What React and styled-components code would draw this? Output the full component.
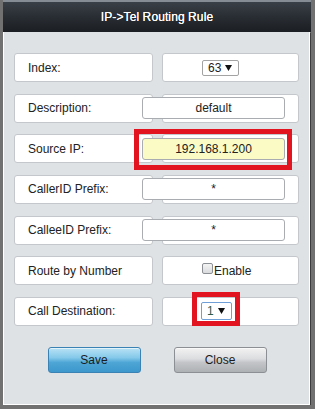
import styled, { createGlobalStyle } from 'styled-components';

const GlobalStyle = createGlobalStyle`
  html, body {
    margin: 0;
    padding: 0;
    background: #717171;
  }
  body {
    font-family: "Liberation Sans", Arial, sans-serif;
  }
`;

const Dialog = styled.div`
  width: 308px;
  margin-left: 3px;
  border-top: 2px solid #858c93;
`;

const TitleBar = styled.div`
  height: 30px;
  background: linear-gradient(#3a4047 0%, #2a2f35 45%, #1b1e22 100%);
  color: #fff;
  font-size: 12px;
  line-height: 30px;
  text-align: center;
  letter-spacing: 0.1px;
  text-shadow: 0 0 0.4px #fff;
`;

const Body = styled.div`
  width: 285px;
  height: 341px;
  padding: 21px 10px 10px 10px;
  background: #dfe2e5;
  border: 1px solid #fff;
  border-top: none;
  box-shadow: 1px 1px 0 #3c3c3c;
  display: flex;
  flex-direction: column;
`;

const Form = styled.div`
  display: grid;
  grid-template-columns: 139px 137px;
  grid-auto-rows: 29px;
  column-gap: 9px;
  row-gap: 11.67px;
`;

const Cell = styled.div`
  box-sizing: border-box;
  background: #fff;
  border: 1px solid #c4c8cc;
  border-radius: 3px;
  display: flex;
  align-items: center;
  font-size: 12px;
  color: #222;
`;

const LabelCell = styled(Cell)`
  padding-left: 13px;
`;

const ValueCell = styled(Cell)`
  padding-left: ${({ $pad }) => ($pad === undefined ? 39 : $pad)}px;
`;

const TextInput = styled.div`
  box-sizing: border-box;
  width: 143px;
  height: 22px;
  margin-left: ${({ $ml }) => ($ml === undefined ? -60 : $ml)}px;
  border: 1px solid #a9acb0;
  border-radius: 3px;
  background: ${({ $active }) => ($active ? '#fbfbc6' : '#fff')};
  display: flex;
  align-items: center;
  justify-content: center;
  font-size: 12px;
  color: #222;
`;

const Select = styled.div`
  box-sizing: border-box;
  width: ${({ $w }) => $w}px;
  height: ${({ $h }) => $h}px;
  border: 1px solid ${({ $focus }) => ($focus ? '#6f9fd6' : '#a3a3a3')};
  border-radius: 2px;
  background: #fff;
  display: flex;
  align-items: center;
  justify-content: space-between;
  padding: 0 6px 0 5px;
  font-size: 12px;
  color: ${({ $focus }) => ($focus ? '#2f5a44' : '#222')};
`;

const Highlight = styled.div`
  position: relative;
  display: flex;
  margin-left: ${({ $ml }) => $ml || 0}px;

  &::after {
    content: '';
    position: absolute;
    inset: ${({ $inset }) => $inset};
    border: 5px solid #e2141f;
    pointer-events: none;
  }
`;

const Check = styled.span`
  box-sizing: border-box;
  width: 11px;
  height: 11px;
  margin-bottom: 4px;
  border: 1px solid #8c8f93;
  border-radius: 2px;
  background: linear-gradient(#f4f4f4, #d9dbdd);
`;

const CheckLabel = styled.span`
  font-size: 12px;
  color: #222;
  margin-left: 1px;
`;

const Buttons = styled.div`
  display: flex;
  justify-content: center;
  gap: 33px;
  margin-top: 21px;
  padding-left: 1px;
`;

const Button = styled.div`
  box-sizing: border-box;
  width: 93px;
  height: 26px;
  border-radius: 3px;
  display: flex;
  align-items: center;
  justify-content: center;
  font-size: 12px;
  color: #1c1c1c;
  border: 1px solid ${({ $primary }) => ($primary ? '#3a82b4' : '#8c9094')};
  background: ${({ $primary }) =>
    $primary
      ? 'linear-gradient(#b9e2f4 0%, #85c9ea 40%, #4ea6d6 60%, #3d97cb 100%)'
      : 'linear-gradient(#f2f2f2 0%, #dcdddf 45%, #c3c5c8 60%, #aeb1b4 100%)'};
  box-shadow: inset 0 1px 0 rgba(255, 255, 255, 0.6);
`;

const Arrow = () => (
  <svg width="7" height="6" viewBox="0 0 7 6">
    <path d="M0 0 H7 L3.5 6 Z" fill="#111" />
  </svg>
);

export default function App() {
  return (
    <>
      <GlobalStyle />
      <Dialog>
        <TitleBar>IP-&gt;Tel Routing Rule</TitleBar>
        <Body>
          <Form>
            <LabelCell>Index:</LabelCell>
            <ValueCell>
              <Select $w={37} $h={16}>
                <span>63</span>
                <Arrow />
              </Select>
            </ValueCell>

            <LabelCell>Description:</LabelCell>
            <ValueCell>
              <TextInput>default</TextInput>
            </ValueCell>

            <LabelCell>Source IP:</LabelCell>
            <ValueCell>
              <Highlight $ml={-60} $inset="-9px -7px -10px -8px">
                <TextInput $active $ml={0}>192.168.1.200</TextInput>
              </Highlight>
            </ValueCell>

            <LabelCell>CallerID Prefix:</LabelCell>
            <ValueCell>
              <TextInput>*</TextInput>
            </ValueCell>

            <LabelCell>CalleeID Prefix:</LabelCell>
            <ValueCell>
              <TextInput>*</TextInput>
            </ValueCell>

            <LabelCell>Route by Number</LabelCell>
            <ValueCell>
              <Check />
              <CheckLabel>Enable</CheckLabel>
            </ValueCell>

            <LabelCell>Call Destination:</LabelCell>
            <ValueCell $pad={38}>
              <Highlight $inset="-10px -8px -6px -9px">
                <Select $w={31} $h={18} $focus>
                  <span>1</span>
                  <Arrow />
                </Select>
              </Highlight>
            </ValueCell>
          </Form>
          <Buttons>
            <Button $primary>Save</Button>
            <Button>Close</Button>
          </Buttons>
        </Body>
      </Dialog>
    </>
  );
}
